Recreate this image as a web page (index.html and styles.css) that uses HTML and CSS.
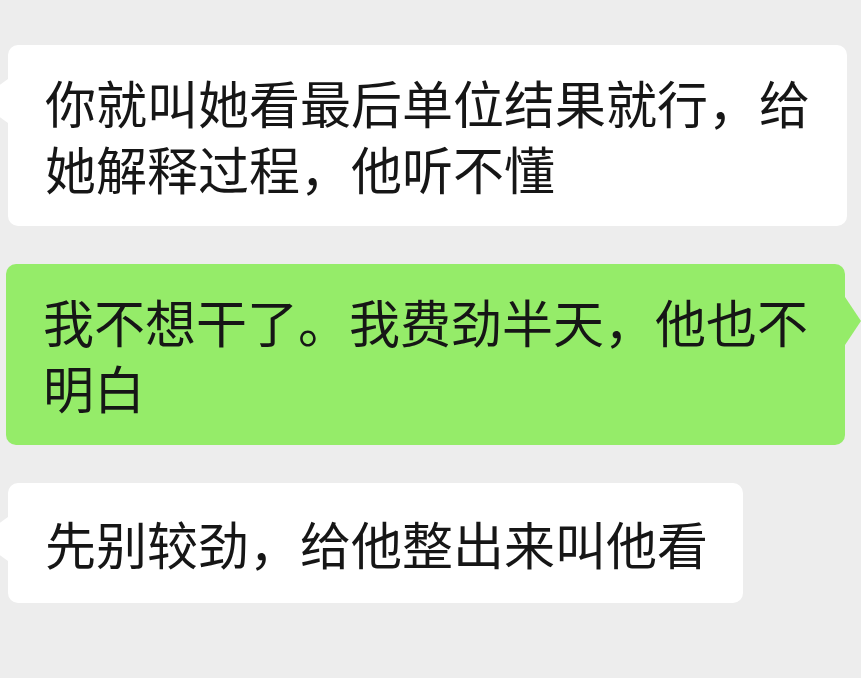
FILE: index.html
```html
<!DOCTYPE html>
<html lang="zh-CN">
<head>
<meta charset="utf-8">
<title>聊天记录</title>
<link rel="stylesheet" href="styles.css">
</head>
<body>
  <main class="chat">
    <div class="row row-in">
      <div class="bubble bubble-in">你就叫她看最后单位结果就行，给她解释过程，他听不懂</div>
    </div>
    <div class="row row-out">
      <div class="bubble bubble-out">我不想干了。我费劲半天，他也不明白</div>
    </div>
    <div class="row row-in">
      <div class="bubble bubble-in bubble-short">先别较劲，给他整出来叫他看</div>
    </div>
  </main>
</body>
</html>
```

FILE: styles.css
```css
html, body {
  margin: 0;
  padding: 0;
  background: #ededed;
  overflow: hidden;
}

.chat {
  width: 861px;
  height: 678px;
  display: flex;
  flex-direction: column;
  gap: 38px;
  padding-top: 45px;
  box-sizing: border-box;
}

.row {
  display: flex;
}

.row-in {
  justify-content: flex-start;
  padding-left: 8px;
}

.row-out {
  justify-content: flex-end;
  padding-right: 16px;
}

.bubble {
  position: relative;
  max-width: 839px;
  box-sizing: border-box;
  padding: 24px 35px 25px 37px;
  border-radius: 10px;
  font-family: "Noto Sans CJK SC", "Noto Sans", sans-serif;
  font-size: 51px;
  line-height: 66px;
  color: #161616;
  word-break: break-all;
}

/* one-line bubbles sit a little taller */
.bubble-short {
  padding-top: 27px;
  padding-bottom: 27px;
}

.bubble-in {
  background: #ffffff;
}

.bubble-out {
  background: #95ec69;
}

/* speech tails */
.bubble-in::before {
  content: "";
  position: absolute;
  left: -30px;
  top: 34px;
  width: 0;
  height: 0;
  border-top: 22px solid transparent;
  border-bottom: 22px solid transparent;
  border-right: 30px solid #ffffff;
}

.bubble-out::after {
  content: "";
  position: absolute;
  right: -16px;
  top: 33px;
  width: 0;
  height: 0;
  border-top: 24px solid transparent;
  border-bottom: 24px solid transparent;
  border-left: 16px solid #95ec69;
}
```
